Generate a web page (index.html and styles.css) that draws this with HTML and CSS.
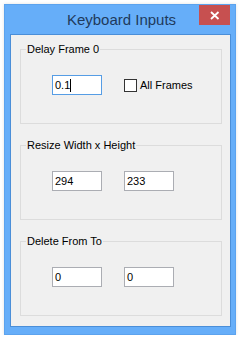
FILE: index.html
```html
<!DOCTYPE html>
<html lang="en">
 <head>
   <meta charset="UTF-8">
   <meta name="viewport" content="width=device-width, initial-scale=1.0">
   <title>Keyboard Inputs</title>
   <link rel="stylesheet" href="styles.css">
 </head>
 <body>
   <div class="window">
     <div class="titlebar">Keyboard Inputs</div>
     <div class="close-button">
       <svg width="31" height="20" viewBox="0 0 31 20">
         <path d="M12 7 L19.5 14 M19.5 7 L12 14" stroke="#fff" stroke-width="1.8" fill="none"/>
       </svg>
     </div>

     <div class="client">
       <fieldset class="group">
         <legend>Delay Frame 0</legend>
         <div class="row">
           <div class="textbox focused">0.1<span class="caret"></span></div>
           <label class="checkbox"><span class="box"></span>All Frames</label>
         </div>
       </fieldset>

       <fieldset class="group">
         <legend>Resize Width x Height</legend>
         <div class="row">
           <div class="textbox">294</div>
           <div class="textbox">233</div>
         </div>
       </fieldset>

       <fieldset class="group">
         <legend>Delete From To</legend>
         <div class="row">
           <div class="textbox">0</div>
           <div class="textbox">0</div>
         </div>
       </fieldset>
     </div>
   </div>
 </body>
</html>
```

FILE: styles.css
```css
body {
    margin: 0;
    background-color: #ffffff;
    font-family: "Liberation Sans", Arial, sans-serif;
}

/* Window frame */
.window {
    box-sizing: border-box;
    width: 232px;
    height: 331px;
    margin: 4px 0 0 4px;
    padding: 0 4px 7px 5px;
    background-color: #66aef9;
    border: 1px solid #5ca3ee;
    box-shadow: 0 0 3px rgba(0, 0, 0, 0.12);
    display: flex;
    flex-direction: column;
    position: relative;
}

.titlebar {
    height: 29px;
    display: flex;
    align-items: center;
    justify-content: center;
    font-size: 15px;
    color: #1f3a5c;
    padding-left: 2px;
}

.close-button {
    position: absolute;
    top: 0;
    right: 5px;
    width: 31px;
    height: 20px;
    background-color: #c75050;
}

.close-button svg {
    display: block;
}

/* Client area */
.client {
    flex: 1;
    background-color: #f0f0f0;
    border: 1px solid #4a8ed8;
    padding: 8px 8px 0 9px;
    display: flex;
    flex-direction: column;
    gap: 15px;
}

.group {
    margin: 0;
    padding: 0 5px;
    border: 1px solid #dcdcdc;
    min-width: 0;
}

.group legend {
    padding: 0 1px;
    font-size: 11px;
    line-height: 13px;
    color: #000000;
}

.row {
    display: flex;
    align-items: center;
    gap: 22px;
    padding: 19px 0 28px 26px;
}

.textbox {
    box-sizing: border-box;
    width: 50px;
    height: 20px;
    padding: 0 2px;
    border: 1px solid #abadb3;
    background-color: #ffffff;
    font-size: 11px;
    line-height: 13px;
    color: #000000;
    display: flex;
    align-items: center;
}

.textbox.focused {
    border-color: #569de5;
}

.caret {
    display: inline-block;
    width: 1px;
    height: 13px;
    background-color: #000000;
}

.checkbox {
    display: flex;
    align-items: center;
    font-size: 11px;
    line-height: 13px;
    color: #000000;
}

.checkbox .box {
    box-sizing: border-box;
    width: 13px;
    height: 13px;
    margin-right: 3px;
    border: 1px solid #333333;
    background-color: #ffffff;
}
```
